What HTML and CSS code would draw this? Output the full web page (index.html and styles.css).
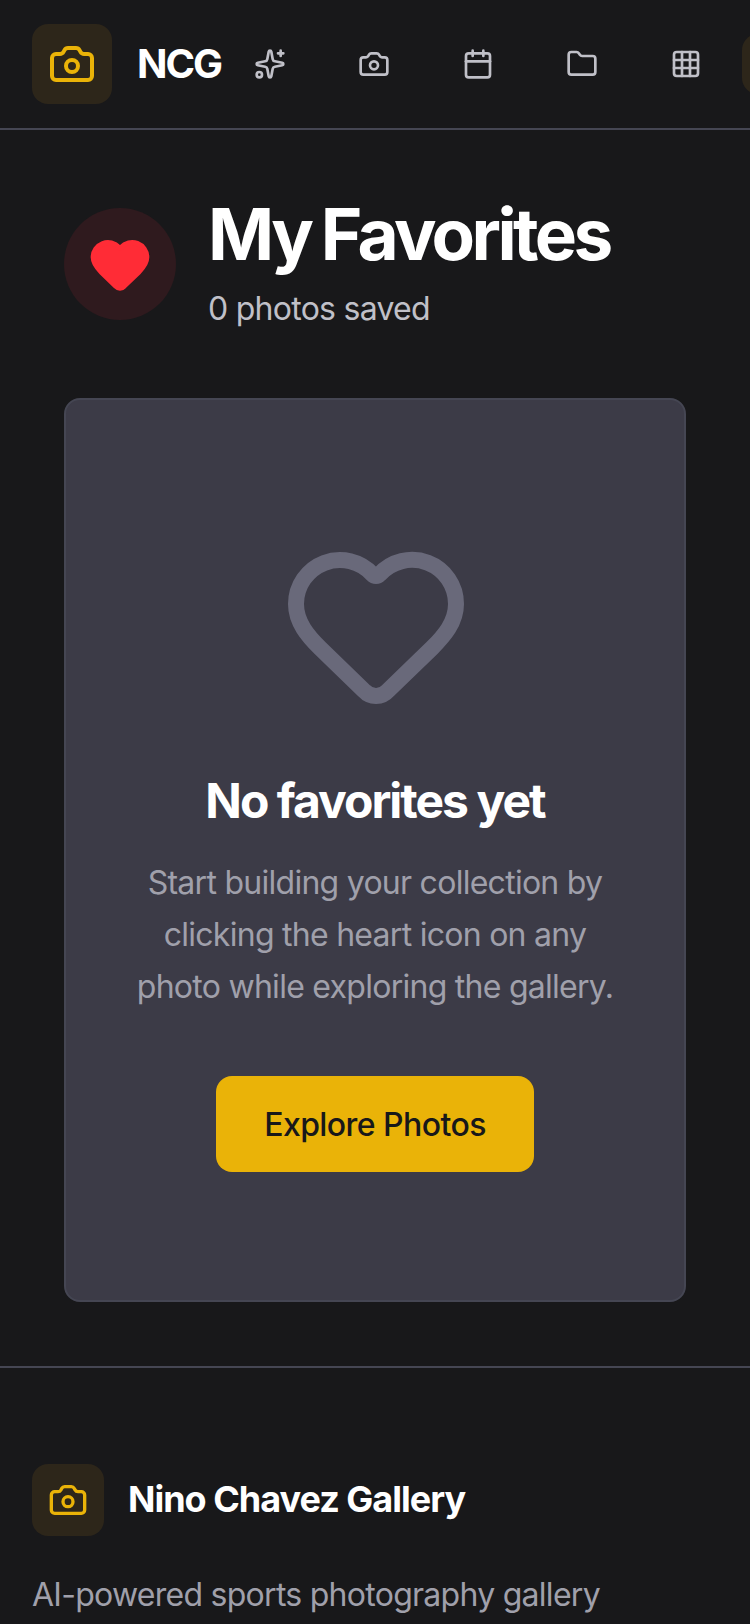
FILE: index.html
```html
<!DOCTYPE html>
<html lang="en">
<head>
<meta charset="utf-8">
<title>My Favorites</title>
<link rel="stylesheet" href="styles.css">
</head>
<body>
<svg class="sprite" aria-hidden="true">
  <symbol id="camera" viewBox="0 0 24 24"><path d="M13.997 4a2 2 0 0 1 1.76 1.05l.486.9A2 2 0 0 0 18.003 7H20a2 2 0 0 1 2 2v9a2 2 0 0 1-2 2H4a2 2 0 0 1-2-2V9a2 2 0 0 1 2-2h1.997a2 2 0 0 0 1.759-1.048l.489-.904A2 2 0 0 1 10.004 4z"/><circle cx="12" cy="13" r="3"/></symbol>
  <symbol id="heart" viewBox="0 0 24 24"><path d="M2 9.5a5.5 5.5 0 0 1 9.591-3.676.56.56 0 0 0 .818 0A5.49 5.49 0 0 1 22 9.5c0 2.29-1.5 4-3 5.5l-5.492 5.313a2 2 0 0 1-3 .019L5 15c-1.5-1.5-3-3.2-3-5.5"/></symbol>
</svg>
<header class="header">
  <a class="brand"><span class="brand-icon"><svg class="icon icon-lg"><use href="#camera"/></svg></span><span class="brand-name">NCG</span></a>
  <nav class="nav">
    <a class="nav-item"><svg class="icon" viewBox="0 0 24 24"><path d="M11.017 2.814a1 1 0 0 1 1.966 0l1.051 5.558a2 2 0 0 0 1.594 1.594l5.558 1.051a1 1 0 0 1 0 1.966l-5.558 1.051a2 2 0 0 0-1.594 1.594l-1.051 5.558a1 1 0 0 1-1.966 0l-1.051-5.558a2 2 0 0 0-1.594-1.594l-5.558-1.051a1 1 0 0 1 0-1.966l5.558-1.051a2 2 0 0 0 1.594-1.594z"/><path d="M20 2v4M22 4h-4"/><circle cx="4" cy="20" r="2"/></svg></a>
    <a class="nav-item"><svg class="icon"><use href="#camera"/></svg></a>
    <a class="nav-item"><svg class="icon" viewBox="0 0 24 24"><path d="M8 2v4M16 2v4"/><rect width="18" height="18" x="3" y="4" rx="2"/><path d="M3 10h18"/></svg></a>
    <a class="nav-item"><svg class="icon" viewBox="0 0 24 24"><path d="M20 20a2 2 0 0 0 2-2V8a2 2 0 0 0-2-2h-7.9a2 2 0 0 1-1.69-.9L9.6 3.9A2 2 0 0 0 7.93 3H4a2 2 0 0 0-2 2v13a2 2 0 0 0 2 2Z"/></svg></a>
    <a class="nav-item"><svg class="icon" viewBox="0 0 24 24"><rect width="18" height="18" x="3" y="3" rx="2"/><path d="M3 9h18M3 15h18M9 3v18M15 3v18"/></svg></a>
    <a class="nav-item active"><svg class="icon"><use href="#heart"/></svg></a>
  </nav>
</header>
<main class="main">
  <div class="page-head">
    <div class="badge"><svg class="icon badge-heart"><use href="#heart"/></svg></div>
    <div>
      <h1 class="title">My Favorites</h1>
      <p class="subtitle">0 photos saved</p>
    </div>
  </div>
  <section class="card">
    <svg class="icon empty-heart"><use href="#heart"/></svg>
    <h2 class="card-title">No favorites yet</h2>
    <p class="card-text">Start building your collection by<br>clicking the heart icon on any<br>photo while exploring the gallery.</p>
    <a class="button">Explore Photos</a>
  </section>
</main>
<footer class="footer">
  <div class="footer-brand"><span class="footer-icon"><svg class="icon icon-md"><use href="#camera"/></svg></span><span class="footer-name">Nino Chavez Gallery</span></div>
  <p class="footer-text">AI-powered sports photography gallery</p>
</footer>
</body>
</html>
```
FILE: styles.css
```css
* { box-sizing: border-box; margin: 0; padding: 0; }
html { overflow: hidden; }
body {
  width: 750px;
  height: 1624px;
  overflow: hidden;
  background: #18181a;
  color: #fff;
  font: 400 32px/52px Inter, "Liberation Sans", sans-serif;
  letter-spacing: -0.73px;
}
.sprite { display: none; }
.icon {
  display: block;
  flex: none;
  width: 32px;
  height: 32px;
  fill: none;
  stroke: currentColor;
  stroke-width: 2;
  stroke-linecap: round;
  stroke-linejoin: round;
}
.icon-lg { width: 48px; height: 48px; }
.icon-md { width: 40px; height: 40px; }
.header {
  display: flex;
  align-items: center;
  height: 130px;
  padding-left: 32px;
  border-bottom: 2px solid #454653;
  overflow: hidden;
}
.brand { display: flex; align-items: center; flex: none; width: 190px; gap: 25px; }
.brand-icon, .footer-icon {
  display: flex;
  align-items: center;
  justify-content: center;
  flex: none;
  width: 80px;
  height: 80px;
  border-radius: 16px;
  background: #2d261a;
  color: #eab308;
}
.brand-name { font-size: 40px; font-weight: 700; line-height: 56px; letter-spacing: -2px; }
.nav { display: flex; gap: 8px; flex: none; color: #c0c0c8; }
.nav-item { display: flex; align-items: center; height: 60px; padding: 0 32px; border-radius: 16px; }
.active { background: #2d261a; color: #eab308; }
.main { padding: 64px; }
.page-head { display: flex; align-items: center; gap: 32px; margin-bottom: 64px; }
.badge {
  display: flex;
  align-items: center;
  justify-content: center;
  width: 112px;
  height: 112px;
  border-radius: 50%;
  background: #2f1a1e;
  color: #ff2c36;
}
.badge-heart { width: 64px; height: 64px; fill: currentColor; }
.title {
  font-size: 71px;
  font-weight: 700;
  line-height: 80px;
  letter-spacing: -3.6px;
  word-spacing: -3px;
  white-space: nowrap;
}
.subtitle { padding-top: 9px; line-height: 51px; color: #c0c0c8; }
.card {
  display: flex;
  flex-direction: column;
  align-items: center;
  padding: 128px 0;
  border: 2px solid #454653;
  border-radius: 16px;
  background: #3c3b47;
  text-align: center;
}
.empty-heart { width: 192px; height: 192px; margin-left: 2px; color: #69697a; }
.card-title { margin-top: 49px; font-size: 48px; font-weight: 700; line-height: 64px; letter-spacing: -1.98px; }
.card-text { margin-top: 24px; color: #a0a0ab; white-space: nowrap; }
.button {
  margin-top: 63px;
  padding: 23px 48px 21px;
  border-radius: 16px;
  background: #eab308;
  color: #18181a;
  font-weight: 500;
  letter-spacing: -0.57px;
}
.footer { padding: 96px 32px 0; border-top: 2px solid #454653; }
.footer-brand { display: flex; align-items: center; gap: 24px; margin-bottom: 33px; }
.footer-icon { width: 72px; height: 72px; }
.footer-name { padding-bottom: 2px; font-size: 36px; font-weight: 650; line-height: 56px; letter-spacing: -1px; }
.footer-text { color: #a0a0ab; }
```
